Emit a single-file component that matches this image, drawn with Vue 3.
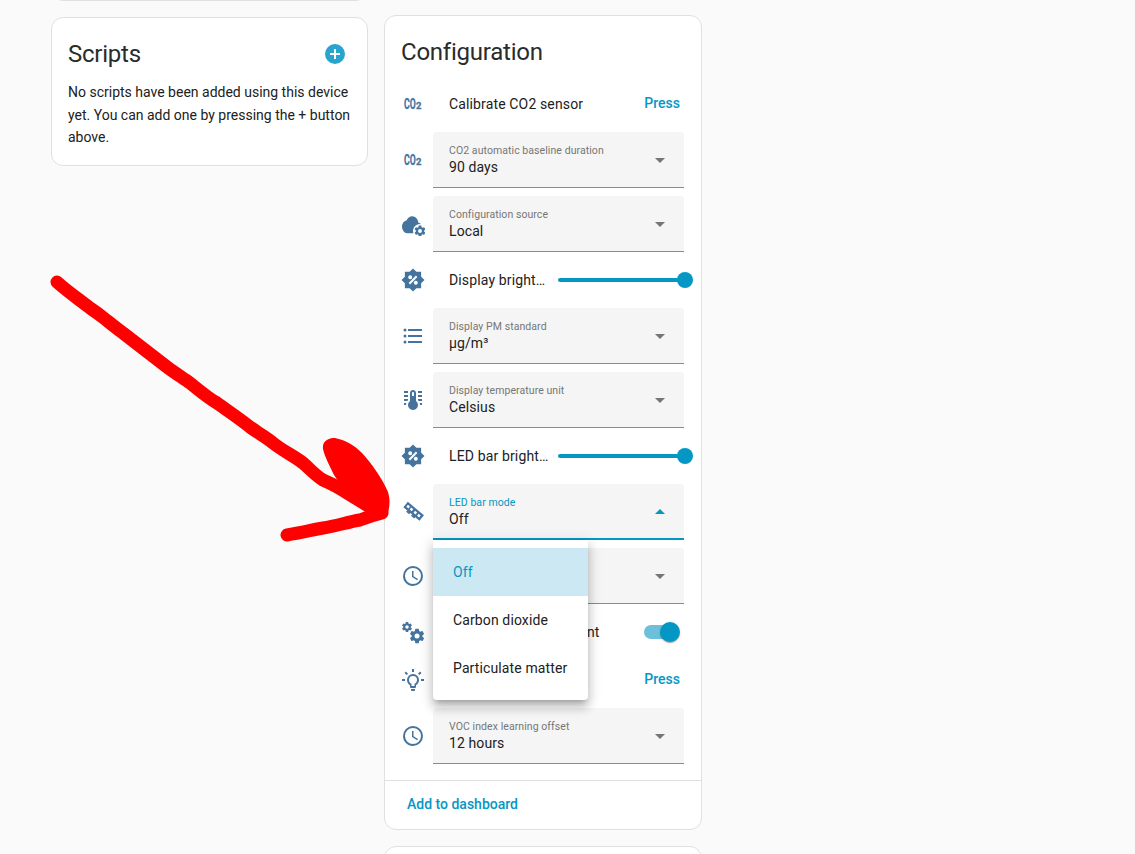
<script setup>
const cog = 'M12,15.5A3.5,3.5 0 0,1 8.5,12A3.5,3.5 0 0,1 12,8.5A3.5,3.5 0 0,1 15.5,12A3.5,3.5 0 0,1 12,15.5M19.43,12.97C19.47,12.65 19.5,12.33 19.5,12C19.5,11.67 19.47,11.34 19.43,11L21.54,9.37C21.73,9.22 21.78,8.95 21.66,8.73L19.66,5.27C19.54,5.05 19.27,4.96 19.05,5.05L16.56,6.05C16.04,5.66 15.5,5.32 14.87,5.07L14.5,2.42C14.46,2.18 14.25,2 14,2H10C9.75,2 9.54,2.18 9.5,2.42L9.13,5.07C8.5,5.32 7.96,5.66 7.44,6.05L4.95,5.05C4.73,4.96 4.46,5.05 4.34,5.27L2.34,8.73C2.21,8.95 2.27,9.22 2.46,9.37L4.57,11C4.53,11.34 4.5,11.67 4.5,12C4.5,12.33 4.53,12.65 4.57,12.97L2.46,14.63C2.27,14.78 2.21,15.05 2.34,15.27L4.34,18.73C4.46,18.95 4.73,19.03 4.95,18.95L7.44,17.94C7.96,18.34 8.5,18.68 9.13,18.93L9.5,21.58C9.54,21.82 9.75,22 10,22H14C14.25,22 14.46,21.82 14.5,21.58L14.87,18.93C15.5,18.67 16.04,18.34 16.56,17.94L19.05,18.95C19.27,19.03 19.54,18.95 19.66,18.73L21.66,15.27C21.78,15.05 21.73,14.78 21.54,14.63L19.43,12.97Z'
const cloud = 'M19.35,10.03C18.67,6.59 15.64,4 12,4C9.11,4 6.6,5.64 5.35,8.03C2.34,8.36 0,10.9 0,14A6,6 0 0,0 6,20H19A5,5 0 0,0 24,15C24,12.36 21.95,10.22 19.35,10.03Z'
const clock = 'M12,20A8,8 0 0,0 20,12A8,8 0 0,0 12,4A8,8 0 0,0 4,12A8,8 0 0,0 12,20M12,2A10,10 0 0,1 22,12A10,10 0 0,1 12,22C6.47,22 2,17.5 2,12A10,10 0 0,1 12,2M12.5,7V12.25L17,14.92L16.25,16.15L11,13V7H12.5Z'
const star = 'M23.5,12L20.13,15.37L20.13,20.13L15.37,20.13L12,23.5L8.63,20.13L3.87,20.13L3.87,15.37L.5,12L3.87,8.63L3.87,3.87L8.63,3.87L12,.5L15.37,3.87L20.13,3.87L20.13,8.63Z'

const icons = {
  cloudCog: [
    { d: cloud, t: 'translate(1 0) scale(.85 1.06)' },
    { d: 'M19,12a7,7 0 1,0 .01,0Z', fill: '#fff' },
    { d: cog, t: 'translate(12.4 12.4) scale(.55)' },
  ],
  percent: [
    { d: star },
    { d: 'M14.9,7.6L16.4,9.1L9.1,16.4L7.6,14.9ZM9.2,7.2a2,2 0 1,0 .01,0ZM14.8,12.8a2,2 0 1,0 .01,0Z', fill: '#fff' },
  ],
  list: [{ d: 'M7,5H21V7H7V5M7,13V11H21V13H7M4,4.5A1.5,1.5 0 0,1 5.5,6A1.5,1.5 0 0,1 4,7.5A1.5,1.5 0 0,1 2.5,6A1.5,1.5 0 0,1 4,4.5M4,10.5A1.5,1.5 0 0,1 5.5,12A1.5,1.5 0 0,1 4,13.5A1.5,1.5 0 0,1 2.5,12A1.5,1.5 0 0,1 4,10.5M7,19V17H21V19H7M4,16.5A1.5,1.5 0 0,1 5.5,18A1.5,1.5 0 0,1 4,19.5A1.5,1.5 0 0,1 2.5,18A1.5,1.5 0 0,1 4,16.5Z' }],
  thermo: [{ d: 'M17 3H21V5H17V3M17 7H21V9H17V7M17 11H21V13H17.75L17 12.1V11M21 15V17H19C19 16.31 18.9 15.63 18.71 15H21M7 3V5H3V3H7M7 7V9H3V7H7M7 11V12.1L6.25 13H3V11H7M3 15H5.29C5.1 15.63 5 16.31 5 17H3V15M15 13V5C15 3.34 13.66 2 12 2S9 3.34 9 5V13C6.79 14.66 6.34 17.79 8 20S12.79 22.66 15 21 17.66 16.21 16 14C15.72 13.62 15.38 13.28 15 13M12 4C12.55 4 13 4.45 13 5V8H11V5C11 4.45 11.45 4 12 4Z' }],
  ledStrip: [{
    d: 'M1.5,7.5H22.5V14.5H1.5ZM3.5,9.8V12.2H6.2V9.8ZM7.8,9.8V12.2H10.5V9.8ZM12.8,9.8V12.2H15.5V9.8ZM17.5,9.8V12.2H20.2V9.8ZM13,14.5H17V16.2H13ZM6.5,14.5H10.5V16.2H6.5Z',
    t: 'rotate(40 12 12)',
    rule: 'evenodd',
  }],
  clock: [{ d: clock }],
  cogs: [
    { d: cog, t: 'translate(0 1) scale(.5)' },
    { d: cog, t: 'translate(7.4 7.4) scale(.72)' },
  ],
  bulb: [{
    d: 'M12,6A6,6 0 0,1 18,12C18,14.22 16.79,16.16 15,17.2V19A1,1 0 0,1 14,20H10A1,1 0 0,1 9,19V17.2C7.21,16.16 6,14.22 6,12A6,6 0 0,1 12,6ZM12,8A4,4 0 0,0 8,12C8,13.64 9,15.1 10.5,15.8V18H13.5V15.8C15,15.1 16,13.64 16,12A4,4 0 0,0 12,8ZM14,21V22A1,1 0 0,1 13,23H11A1,1 0 0,1 10,22V21H14M20,11H23V13H20V11M1,11H4V13H1V11M13,1V4H11V1H13M4.92,3.5L7.05,5.64L5.63,7.05L3.5,4.93L4.92,3.5M16.95,5.63L19.07,3.5L20.5,4.93L18.36,7.05L16.95,5.63Z',
    rule: 'evenodd',
  }],
}

const rows = [
  { kind: 'button', icon: 'co2', label: 'Calibrate CO2 sensor' },
  { kind: 'select', icon: 'co2', label: 'CO2 automatic baseline duration', value: '90 days' },
  { kind: 'select', icon: 'cloudCog', label: 'Configuration source', value: 'Local' },
  { kind: 'slider', icon: 'percent', label: 'Display brightness' },
  { kind: 'select', icon: 'list', label: 'Display PM standard', value: 'μg/m³' },
  { kind: 'select', icon: 'thermo', label: 'Display temperature unit', value: 'Celsius' },
  { kind: 'slider', icon: 'percent', label: 'LED bar brightness' },
  { kind: 'select', icon: 'ledStrip', label: 'LED bar mode', value: 'Off', open: true },
  { kind: 'select', icon: 'clock', label: 'NOx index learning offset', value: '12 hours' },
  { kind: 'switch', icon: 'cogs', label: 'Post data to Airgradient' },
  { kind: 'button', icon: 'bulb', label: 'LED bar test' },
  { kind: 'select', icon: 'clock', label: 'VOC index learning offset', value: '12 hours' },
]

const options = ['Off', 'Carbon dioxide', 'Particulate matter']
</script>

<template>
  <div class="page">
    <div class="columns">
      <div class="col col--left">
        <div class="card card--stub"></div>
        <div class="card scripts">
          <div class="scripts__head">
            <h2 class="title">Scripts</h2>
            <svg class="add" viewBox="0 0 20 20">
              <circle cx="10" cy="10" r="10" fill="#29a5cd" />
              <path d="M9 5h2v4h4v2h-4v4H9v-4H5V9h4z" fill="#fff" />
            </svg>
          </div>
          <p class="scripts__text">No scripts have been added using this device yet. You can add one by pressing the + button above.</p>
        </div>
      </div>

      <div class="col col--right">
        <div class="card config">
          <h2 class="title config__title">Configuration</h2>
          <div class="config__rows">
            <div v-for="row in rows" :key="row.label" class="row">
              <div class="row__icon">
                <span v-if="row.icon === 'co2'" class="co2"><span class="co2__main">CO</span><span class="co2__sub">2</span></span>
                <svg v-else viewBox="0 0 24 24" width="24" height="24">
                  <path
                    v-for="(p, i) in icons[row.icon]"
                    :key="i"
                    :d="p.d"
                    :transform="p.t"
                    :fill="p.fill || '#44739e'"
                    :fill-rule="p.rule || 'nonzero'"
                  />
                </svg>
              </div>

              <div v-if="row.kind === 'select'" class="select" :class="{ 'select--open': row.open }">
                <div class="select__text">
                  <span class="select__label">{{ row.label }}</span>
                  <span class="select__value">{{ row.value }}</span>
                </div>
                <span class="select__arrow"></span>
                <div v-if="row.open" class="menu">
                  <div
                    v-for="(opt, i) in options"
                    :key="opt"
                    class="menu__item"
                    :class="{ 'menu__item--on': i === 0 }"
                  >{{ opt }}</div>
                </div>
              </div>

              <template v-else>
                <span class="row__name" :class="{ 'row__name--short': row.kind === 'slider' }">{{ row.label }}</span>
                <span v-if="row.kind === 'button'" class="press">Press</span>
                <div v-if="row.kind === 'slider'" class="slider">
                  <span class="slider__thumb"></span>
                </div>
                <div v-if="row.kind === 'switch'" class="switch">
                  <span class="switch__thumb"></span>
                </div>
              </template>
            </div>
          </div>
          <div class="config__foot">
            <span class="link">Add to dashboard</span>
          </div>
        </div>
        <div class="card card--next"></div>
      </div>
    </div>

    <svg class="scribble" viewBox="0 0 1135 854" width="1135" height="854">
      <path
        d="M57 282C68 292 80 300 90 308C96 312 100 315 105 319C110 323 116 328 123 333L167 367C175 373 183 378 190 383C200 391 208 398 217 403C228 411 240 419 250 427C258 433 266 437 273 443C283 451 294 456 303 463C310 469 316 476 323 480C332 484 340 488 347 493L378 512"
        fill="none" stroke="#f00" stroke-width="13" stroke-linecap="round" stroke-linejoin="round"
      />
      <path
        d="M287 535C300 533 312 530 323 528C336 526 348 522 360 520C368 517 374 515 382 513"
        fill="none" stroke="#f00" stroke-width="13" stroke-linecap="round" stroke-linejoin="round"
      />
      <path
        d="M323 449C322 441 328 438 335 438C345 440 354 445 362 453C372 464 382 478 388 492C391 502 389 510 387 516L372 512C362 505 352 496 342 487L334 475C330 466 325 458 323 449Z"
        fill="#f00"
      />
    </svg>
  </div>
</template>

<style>
html, body { margin: 0; background: #fafafa; }
</style>

<style scoped>
.page {
  position: relative;
  width: 1135px;
  height: 854px;
  overflow: hidden;
  background: #fafafa;
  font-family: Roboto, "Liberation Sans", sans-serif;
  color: #212121;
}
.columns {
  display: flex;
  gap: 16px;
  padding-left: 51px;
  align-items: flex-start;
}
.col {
  display: flex;
  flex-direction: column;
  gap: 16px;
}
.col--left { width: 317px; margin-top: -59px; }
.col--right { width: 318px; padding-top: 15px; }

.card {
  box-sizing: border-box;
  background: #fff;
  border: 1px solid #e0e0e0;
  border-radius: 12px;
}
.card--stub { height: 60px; }
.card--next { height: 60px; }

.title {
  margin: 0;
  font-size: 24px;
  font-weight: 400;
  line-height: 32px;
  letter-spacing: -.23px;
  color: #2b2b2b;
}

.scripts { height: 149px; padding: 20px 16px 0; }
.scripts__head {
  display: flex;
  align-items: center;
  justify-content: space-between;
  padding-right: 6px;
}
.add { width: 20px; height: 20px; }
.scripts__text {
  margin: 11px 0 0;
  font-size: 14px;
  line-height: 22.5px;
}

.config { height: 815px; display: flex; flex-direction: column; }
.config__title { padding: 20px 16px 0; }
.config__rows {
  display: flex;
  flex-direction: column;
  gap: 8px;
  padding: 16px 17px 0 16px;
}
.config__foot {
  margin-top: 16px;
  border-top: 1px solid #e0e0e0;
  padding: 13px 22px;
}
.link {
  font-size: 14px;
  font-weight: 500;
  line-height: 20px;
  color: #0497c4;
}

.row {
  display: flex;
  align-items: center;
  min-height: 40px;
}
.row__icon {
  flex: none;
  width: 24px;
  height: 24px;
  margin-right: 8px;
  display: flex;
  align-items: center;
  justify-content: center;
}
.row__icon svg { display: block; }
.co2 {
  display: flex;
  align-items: flex-end;
  width: 18px;
  height: 12px;
  color: #44739e;
  font-weight: 700;
  white-space: nowrap;
  -webkit-text-stroke: .3px #44739e;
}
.co2__main {
  display: inline-block;
  width: 12px;
  font-size: 14px;
  line-height: 11px;
  transform: scaleX(.62);
  transform-origin: left center;
}
.co2__sub {
  font-size: 9.5px;
  line-height: 8px;
}

.row__name {
  flex: 1;
  margin-left: 16px;
  font-size: 14px;
  line-height: 20px;
  letter-spacing: .14px;
  white-space: nowrap;
}
.row__name--short {
  flex: none;
  width: 100px;
  overflow: hidden;
  text-overflow: ellipsis;
}
.press {
  font-size: 14px;
  font-weight: 500;
  color: #0497c4;
  margin-right: 4px;
  transform: translateY(-1px);
}

.select {
  position: relative;
  flex: 1;
  box-sizing: border-box;
  height: 56px;
  display: flex;
  align-items: center;
  justify-content: space-between;
  padding: 0 19px 0 16px;
  background: #f5f5f5;
  border-radius: 4px 4px 0 0;
  border-bottom: 1px solid #8c8c8c;
}
.select__text { display: flex; flex-direction: column; margin-top: 1px; }
.select__label {
  font-size: 10.5px;
  line-height: 14px;
  letter-spacing: .07px;
  color: #757575;
}
.select__value {
  font-size: 14px;
  line-height: 19px;
  letter-spacing: .1px;
}
.select__arrow {
  width: 0;
  height: 0;
  margin-top: 2px;
  border-left: 5px solid transparent;
  border-right: 5px solid transparent;
  border-top: 5px solid #757575;
}
.select--open { border-bottom: 2px solid #0497c4; padding-top: 1px; }
.select--open .select__label { color: #0497c4; }
.select--open .select__arrow {
  margin-top: 0;
  border-top: 0;
  border-bottom: 5px solid #0497c4;
}

.menu {
  position: absolute;
  z-index: 2;
  top: 100%;
  margin-top: 2px;
  left: 0;
  width: 155px;
  padding: 8px 0;
  background: #fff;
  border-radius: 0 0 4px 4px;
  box-shadow: 0 5px 5px -3px rgba(0,0,0,.2), 0 8px 10px 1px rgba(0,0,0,.14), 0 3px 14px 2px rgba(0,0,0,.12);
}
.menu__item {
  height: 48px;
  line-height: 48px;
  padding: 0 20px;
  font-size: 14px;
  letter-spacing: .12px;
  white-space: nowrap;
}
.menu__item--on {
  background: #cce9f3;
  color: #0497c4;
}

.slider {
  position: relative;
  flex: 1;
  height: 4px;
  margin-left: 9px;
  border-radius: 2px;
  background: #0497c4;
}
.slider__thumb {
  position: absolute;
  right: -9px;
  top: -6px;
  width: 16px;
  height: 16px;
  border-radius: 50%;
  background: #0497c4;
}

.switch {
  position: relative;
  flex: none;
  width: 35px;
  height: 14px;
  margin-right: 5px;
  border-radius: 7px;
  background: #6dc0dc;
}
.switch__thumb {
  position: absolute;
  right: -1px;
  top: -3px;
  width: 20px;
  height: 20px;
  border-radius: 50%;
  background: #0497c4;
  box-shadow: 0 2px 1px -1px rgba(0,0,0,.2), 0 1px 1px 0 rgba(0,0,0,.14), 0 1px 3px 0 rgba(0,0,0,.12);
}

.scribble {
  position: absolute;
  left: 0;
  top: 0;
  z-index: 5;
  pointer-events: none;
}
</style>
